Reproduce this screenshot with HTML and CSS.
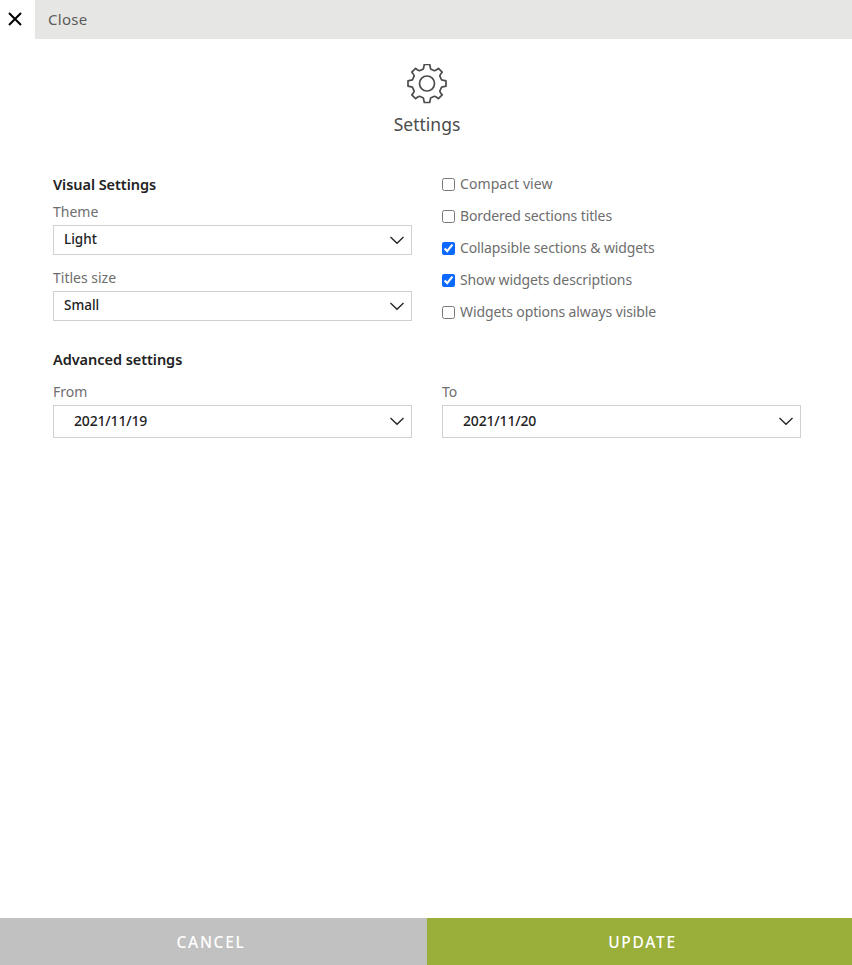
FILE: index.html
```html
<!DOCTYPE html>
<html lang="en">
<head>
<meta charset="utf-8">
<title>Settings</title>
<link rel="stylesheet" href="styles.css">
</head>
<body>
<div class="panel">
  <header class="topbar">
    <button class="close" aria-label="Close"><svg width="14" height="14" viewBox="0 0 14 14"><path d="M1 1L13 13M13 1L1 13"/></svg></button>
    <div class="topbar-title">Close</div>
  </header>
  <main class="content">
    <div class="hero">
      <svg class="gear" width="40" height="40" viewBox="-20 -19.5 40 40"><path d="M-2.7-19H2.7L3.6-14.6Q5.8-13.6 7.6-12.8Q9.8-13.6 11.4-15.2L15.2-11.4Q13.6-9.8 12.8-7.6Q13.6-5.8 14.6-3.6L19-2.7V2.7L14.6 3.6Q13.6 5.8 12.8 7.6Q13.6 9.8 15.2 11.4L11.4 15.2Q9.8 13.6 7.6 12.8Q5.8 13.6 3.6 14.6L2.7 19H-2.7L-3.6 14.6Q-5.8 13.6-7.6 12.8Q-9.8 13.6-11.4 15.2L-15.2 11.4Q-13.6 9.8-12.8 7.6Q-13.6 5.8-14.6 3.6L-19 2.7V-2.7L-14.6-3.6Q-13.6-5.8-12.8-7.6Q-13.6-9.8-15.2-11.4L-11.4-15.2Q-9.8-13.6-7.6-12.8Q-5.8-13.6-3.6-14.6Z"/><circle r="7.5"/></svg>
      <h1>Settings</h1>
    </div>
    <div class="columns visual">
      <section>
        <h2>Visual Settings</h2>
        <div class="label first">Theme</div>
        <div class="select"><span>Light</span><svg class="chevron" width="14" height="9" viewBox="0 0 14 9"><path d="M.5 1L7 7.3L13.5 1"/></svg></div>
        <div class="label second">Titles size</div>
        <div class="select"><span>Small</span><svg class="chevron" width="14" height="9" viewBox="0 0 14 9"><path d="M.5 1L7 7.3L13.5 1"/></svg></div>
      </section>
      <section class="checks">
        <label><input type="checkbox"><span class="compact">Compact view</span></label>
        <label><input type="checkbox"><span>Bordered sections titles</span></label>
        <label><input type="checkbox" checked><span>Collapsible sections &amp; widgets</span></label>
        <label><input type="checkbox" checked><span>Show widgets descriptions</span></label>
        <label><input type="checkbox"><span>Widgets options always visible</span></label>
      </section>
    </div>
    <h2>Advanced settings</h2>
    <div class="columns dates">
      <div>
        <div class="label">From</div>
        <div class="select date"><span>2021/11/19</span><svg class="chevron" width="14" height="9" viewBox="0 0 14 9"><path d="M.5 1L7 7.3L13.5 1"/></svg></div>
      </div>
      <div>
        <div class="label">To</div>
        <div class="select date"><span>2021/11/20</span><svg class="chevron" width="14" height="9" viewBox="0 0 14 9"><path d="M.5 1L7 7.3L13.5 1"/></svg></div>
      </div>
    </div>
  </main>
  <footer>
    <button class="cancel">CANCEL</button>
    <button class="update">UPDATE</button>
  </footer>
</div>
</body>
</html>
```
FILE: styles.css
```css
* { box-sizing: border-box; }
body { margin: 0; background: #fff; font-family: "Noto Sans", sans-serif; font-size: 14px; color: #6e6e6e; }
button { border: 0; padding: 0; font-family: inherit; }
svg { display: block; fill: none; }
.panel { height: 965px; display: flex; flex-direction: column; }
.topbar { display: flex; height: 39px; }
.close { width: 35px; padding: 0 0 2px 8px; background: #fff; display: flex; align-items: center; }
.close svg { stroke: #000; stroke-width: 2; }
.topbar-title { flex: 1; background: #e6e6e4; padding-left: 13px; font-size: 15px; letter-spacing: .3px; line-height: 39px; color: #5b5b5b; }
.content { flex: 1; padding: 0 51px 0 53px; }
.hero { display: flex; flex-direction: column; align-items: center; padding-top: 25px; height: 133px; }
.gear { stroke: #4c4c4c; stroke-width: 1.7; stroke-linejoin: round; }
h1 { margin: 8px 0 0; font-size: 17.5px; line-height: 24px; font-weight: 400; color: #4c4c4c; }
h2 { margin: 0; font-size: 14.5px; line-height: 24px; font-weight: 600; color: #222; letter-spacing: -.05px; }
.columns { display: grid; grid-template-columns: 359px 359px; column-gap: 30px; }
.visual { height: 175px; }
.label { height: 28px; line-height: 30px; }
.label.first { height: 29px; line-height: 32px; }
.second { height: 36px; line-height: 46px; }
.select { height: 30px; border: 1px solid #d0d0d0; padding: 0 7px 0 10px; display: flex; align-items: center; justify-content: space-between; line-height: 26px; color: #222; font-weight: 500; font-size: 13.5px; }
.select span { height: 28px; }
.chevron { stroke: #222; stroke-width: 1.3; margin-top: 1px; }
.checks label { display: flex; align-items: center; height: 24px; margin-bottom: 8px; }
.checks span { letter-spacing: -.11px; line-height: 24px; height: 24px; }
.checks .compact { letter-spacing: .08px; }
.checks input { width: 13px; height: 13px; margin: 0 5px 0 0; accent-color: #0b69ff; }
.dates .label { height: 34px; line-height: 42px; }
.date { height: 33px; padding-left: 20px; line-height: 29px; font-size: 14px; letter-spacing: -.17px; }
.date span { height: 31px; }
.date .chevron { margin-top: 0; }
footer { height: 47px; display: flex; }
footer button { color: #fff; font-size: 15.5px; font-weight: 500; letter-spacing: 1.7px; line-height: 47px; padding-top: 1px; }
.cancel { width: 427px; padding-right: 5px; background: #c1c1c1; }
.update { flex: 1; padding-left: 6px; background: #99af3a; }
```
